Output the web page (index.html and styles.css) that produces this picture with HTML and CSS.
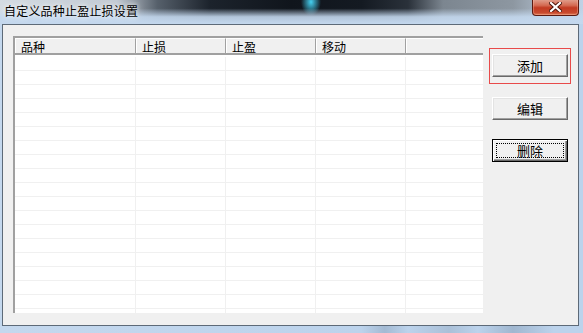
FILE: index.html
```html
<!DOCTYPE html>
<html lang="zh-CN">
<head>
    <meta charset="UTF-8">
    <title>自定义品种止盈止损设置</title>
    <link rel="stylesheet" href="styles.css">
</head>
<body>
    <div class="window">
        <div class="titlebar">
            <span class="title">自定义品种止盈止损设置</span>
            <button class="close-button" title="关闭">
                <svg width="13" height="10" viewBox="0 0 13 10">
                    <path d="M2 1 L11 9 M11 1 L2 9" stroke="#4a1208" stroke-width="4" stroke-linecap="square"/>
                    <path d="M2 1 L11 9 M11 1 L2 9" stroke="#ffffff" stroke-width="2.2" stroke-linecap="square"/>
                </svg>
            </button>
        </div>

        <div class="client">
            <!-- list view -->
            <div class="list">
                <div class="list-header">
                    <div class="col col-1">品种</div>
                    <div class="col col-2">止损</div>
                    <div class="col col-3">止盈</div>
                    <div class="col col-4">移动</div>
                    <div class="col col-5"></div>
                </div>
                <div class="list-body"></div>
            </div>

            <!-- buttons -->
            <div class="side">
                <div class="focus-box">
                    <button class="win-button">添加</button>
                </div>
                <button class="win-button edit">编辑</button>
                <button class="win-button default">删除</button>
            </div>
        </div>
    </div>

    <script>
        // fill empty rows of the list
        const body = document.querySelector('.list-body');
        for (let i = 0; i < 19; i++) {
            const row = document.createElement('div');
            row.className = 'row';
            for (let c = 1; c <= 5; c++) {
                const cell = document.createElement('div');
                cell.className = 'cell col-' + c;
                row.appendChild(cell);
            }
            body.appendChild(row);
        }
    </script>
</body>
</html>
```

FILE: styles.css
```css
*{
    padding: 0;
    margin: 0;
    box-sizing: border-box;
}
body{
    width: 583px;
    height: 333px;
    overflow: hidden;
    font-family: "Noto Sans CJK SC", "Liberation Sans", sans-serif;
    font-size: 12px;
    color: #000;
}
.window{
    width: 583px;
    height: 333px;
    display: flex;
    flex-direction: column;
    background:
        linear-gradient(to right, #c4d8ee 0, #bcd3ec 62%, #a3bad3 66%, #bcd3ec 70%, #aac0d8 77%, #bcd3ec 82%, #a0b7d0 88%, #bcd3ec 95%);
}
.titlebar{
    height: 24px;
    position: relative;
    background:
        linear-gradient(to bottom, rgba(196, 216, 238, 0) 0, rgba(196, 216, 238, 0) 35%, rgba(196, 216, 238, .9) 70%, #c4d8ee 100%),
        radial-gradient(ellipse 10px 14px at 311px 2px, #45d0f0 0, rgba(69, 208, 240, 0) 100%),
        linear-gradient(to right, #d4dbe2 0, #c2cad3 20%, #56606b 27%, #1c232c 36%, #10151c 50%, #141a22 62%, #2a313a 70%, #7c8690 76%, #8d97a1 88%, #a9b6c4 93%, #c0d2e6 100%);
}
.title{
    position: absolute;
    left: 4px;
    top: 2px;
    letter-spacing: .2px;
    line-height: 17px;
    text-shadow: 0 0 4px rgba(255, 255, 255, .9), 0 0 8px rgba(255, 255, 255, .7);
}
.close-button{
    position: absolute;
    left: 532px;
    top: -1px;
    width: 47px;
    height: 17px;
    display: flex;
    justify-content: center;
    align-items: center;
    border: 1px solid #5c1a10;
    border-top: none;
    border-radius: 0 0 4px 4px;
    background: linear-gradient(to bottom, #e2a493 0, #d46a52 40%, #c23a22 55%, #c84a2e 85%, #e07a56 100%);
    box-shadow: inset 0 0 0 1px rgba(255, 200, 180, .35);
}

.client{
    flex: 1;
    margin: 0 4px 7px 2px;
    border: 1px solid #5d6a78;
    background-color: #f0f0f0;
    display: flex;
    padding: 11px 0 0 10px;
}

.list{
    width: 470px;
    height: 277px;
    background-color: #fff;
    border-top: 2px solid #a0a0a0;
    border-left: 2px solid #a0a0a0;
    overflow: hidden;
}
.list-header{
    display: flex;
    height: 17px;
    border-bottom: 2px solid #a0a0a0;
    background-color: #f0f0f0;
}
.col{
    height: 15px;
    line-height: 15px;
    padding-left: 5px;
    border-left: 1px solid #fff;
    border-right: 1px solid #a0a0a0;
    border-top: 1px solid #fff;
}
.col-1{ width: 121px; }
.col-2{ width: 90px; }
.col-3{ width: 90px; }
.col-4{ width: 90px; }
.col-5{ flex: 1; border-right: none; }

.list-body{
    padding-top: 2px;
}
.row{
    display: flex;
    height: 14px;
    border-bottom: 1px solid #f0f0f0;
}
.cell{
    height: 13px;
    border-right: 1px solid #f0f0f0;
}
.cell.col-5{
    border-right: none;
}

.side{
    margin-left: 6px;
    padding-top: 12px;
    display: flex;
    flex-direction: column;
}
.focus-box{
    width: 82px;
    height: 36px;
    border: 1px solid #e84a4a;
    padding: 5px 0 0 2px;
}
.win-button{
    width: 76px;
    height: 23px;
    font: inherit;
    font-size: 13px;
    color: #000;
    background-color: #f0f0f0;
    border: 1px solid;
    border-color: #fff #696969 #696969 #fff;
    box-shadow: inset -1px -1px #a0a0a0, inset 1px 1px #e3e3e3;
    cursor: pointer;
}
.edit{
    margin: 13px 0 0 3px;
}
.default{
    position: relative;
    margin: 19px 0 0 3px;
    border-color: #000;
    box-shadow: inset 1px 1px #fff, inset -1px -1px #696969, inset -2px -2px #a0a0a0;
}
.default::after{
    content: "";
    position: absolute;
    left: 3px;
    top: 3px;
    right: 3px;
    bottom: 3px;
    border: 1px dotted #000;
}
```
